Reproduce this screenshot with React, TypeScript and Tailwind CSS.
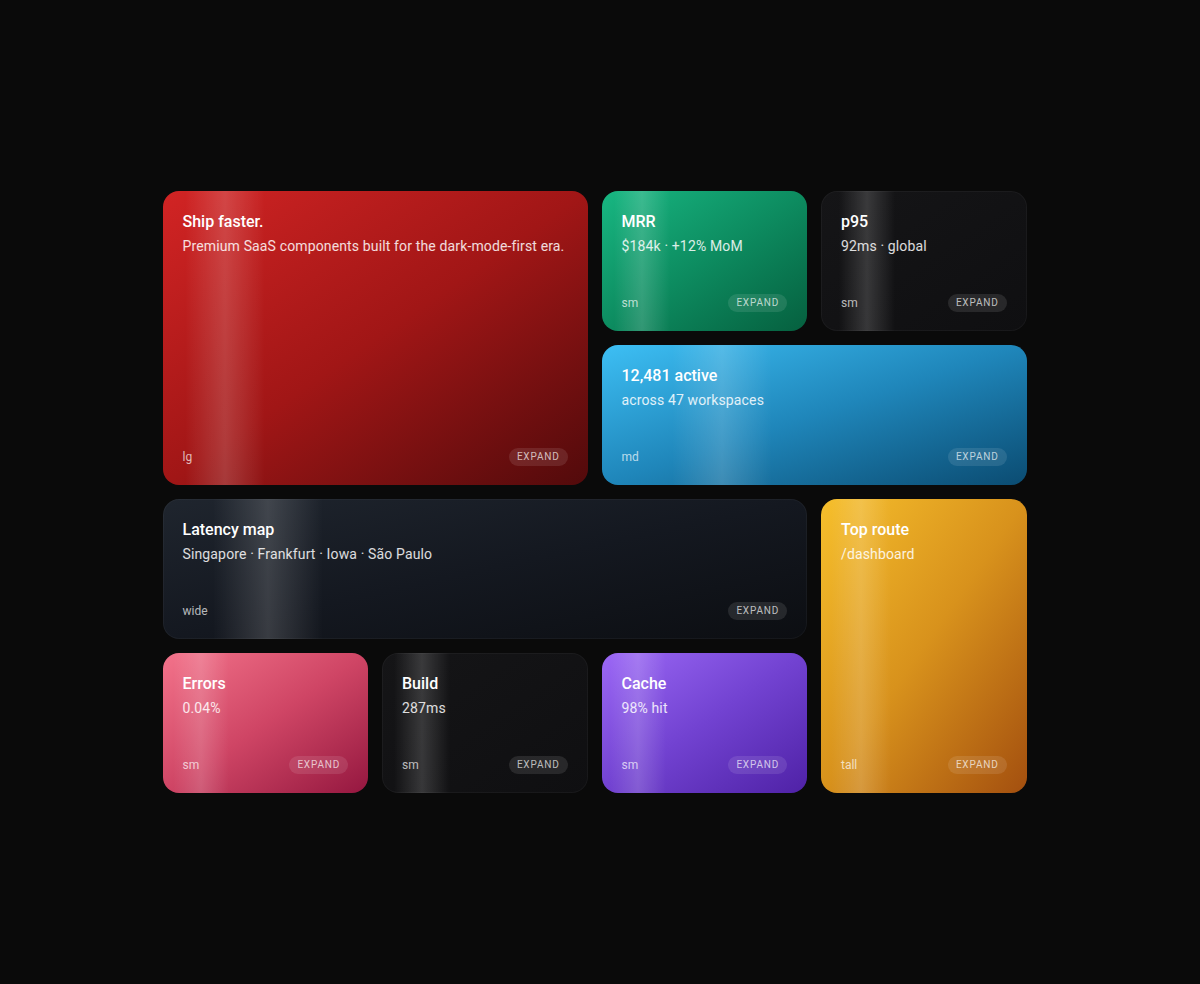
import React from "react";

type Card = {
  title: string;
  sub: string;
  size: string;
  place: string;
  bg: string;
  sheen: string;
  dark?: boolean;
};

const cards: Card[] = [
  {
    title: "Ship faster.",
    sub: "Premium SaaS components built for the dark-mode-first era.",
    size: "lg",
    place: "col-start-1 col-span-2 row-start-1 row-span-2",
    bg: "bg-linear-to-br from-[#d22424] via-[#a11616] to-[#520a0b]",
    sheen: "left-[22px] w-[80px]",
  },
  {
    title: "MRR",
    sub: "$184k · +12% MoM",
    size: "sm",
    place: "col-start-3 row-start-1",
    bg: "bg-linear-to-br from-[#18b782] via-[#0d8c60] to-[#06603f]",
    sheen: "left-[12px] w-[56px]",
  },
  {
    title: "p95",
    sub: "92ms · global",
    size: "sm",
    place: "col-start-4 row-start-1",
    bg: "bg-linear-to-br from-[#151517] to-[#0f0f11]",
    sheen: "left-[18px] w-[56px]",
    dark: true,
  },
  {
    title: "12,481 active",
    sub: "across 47 workspaces",
    size: "md",
    place: "col-start-3 col-span-2 row-start-2",
    bg: "bg-linear-to-br from-[#3dbff4] via-[#1f86ba] to-[#0b4c72]",
    sheen: "left-[70px] w-[100px]",
  },
  {
    title: "Latency map",
    sub: "Singapore · Frankfurt · Iowa · São Paulo",
    size: "wide",
    place: "col-start-1 col-span-3 row-start-3",
    bg: "bg-linear-to-br from-[#1f252e] via-[#141820] to-[#0c0e12]",
    sheen: "left-[50px] w-[110px]",
    dark: true,
  },
  {
    title: "Top route",
    sub: "/dashboard",
    size: "tall",
    place: "col-start-4 row-start-3 row-span-2",
    bg: "bg-linear-to-br from-[#f6bf2c] via-[#d8921c] to-[#a34f0f]",
    sheen: "left-[10px] w-[60px]",
  },
  {
    title: "Errors",
    sub: "0.04%",
    size: "sm",
    place: "col-start-1 row-start-4",
    bg: "bg-linear-to-br from-[#f3738b] via-[#cf4565] to-[#951640]",
    sheen: "left-[10px] w-[56px]",
  },
  {
    title: "Build",
    sub: "287ms",
    size: "sm",
    place: "col-start-2 row-start-4",
    bg: "bg-linear-to-br from-[#151517] to-[#0f0f11]",
    sheen: "left-[12px] w-[56px]",
    dark: true,
  },
  {
    title: "Cache",
    sub: "98% hit",
    size: "sm",
    place: "col-start-3 row-start-4",
    bg: "bg-linear-to-br from-[#9c68f6] via-[#7242d1] to-[#4f21a6]",
    sheen: "left-[8px] w-[56px]",
  },
];

function BentoCard({ c }: { c: Card }) {
  return (
    <div
      className={`${c.place} ${c.bg} relative overflow-hidden rounded-2xl ${
        c.dark ? "ring-1 ring-inset ring-white/[0.04]" : ""
      }`}
    >
      <div
        className={`pointer-events-none absolute top-0 bottom-0 ${c.sheen} bg-linear-to-r from-transparent via-white/[0.16] to-transparent`}
      />
      <div className="relative flex h-full flex-col justify-between px-5 pt-[19px] pb-[19px]">
        <div>
          <div className="text-[16px] leading-6 font-medium text-white">{c.title}</div>
          <div className="mt-0.5 text-[14px] leading-5 tracking-[0.01em] text-white/85">{c.sub}</div>
        </div>
        <div className="flex items-center justify-between">
          <span className="text-[12px] leading-4 text-white/70">{c.size}</span>
          <span className="rounded-full bg-white/10 px-2 py-0.5 text-[10px] leading-[14px] font-normal tracking-[0.08em] text-white/70">
            EXPAND
          </span>
        </div>
      </div>
    </div>
  );
}

export default function App() {
  return (
    <div
      className="flex h-[984px] w-full items-center justify-center bg-[#0a0a0a] pr-[11px]"
      style={{ fontFamily: "Roboto, 'Noto Sans', sans-serif" }}
    >
      <div className="grid grid-cols-[repeat(4,205.5px)] grid-rows-[repeat(4,140px)] gap-[14px]">
        {cards.map((c) => (
          <BentoCard key={c.title} c={c} />
        ))}
      </div>
    </div>
  );
}
